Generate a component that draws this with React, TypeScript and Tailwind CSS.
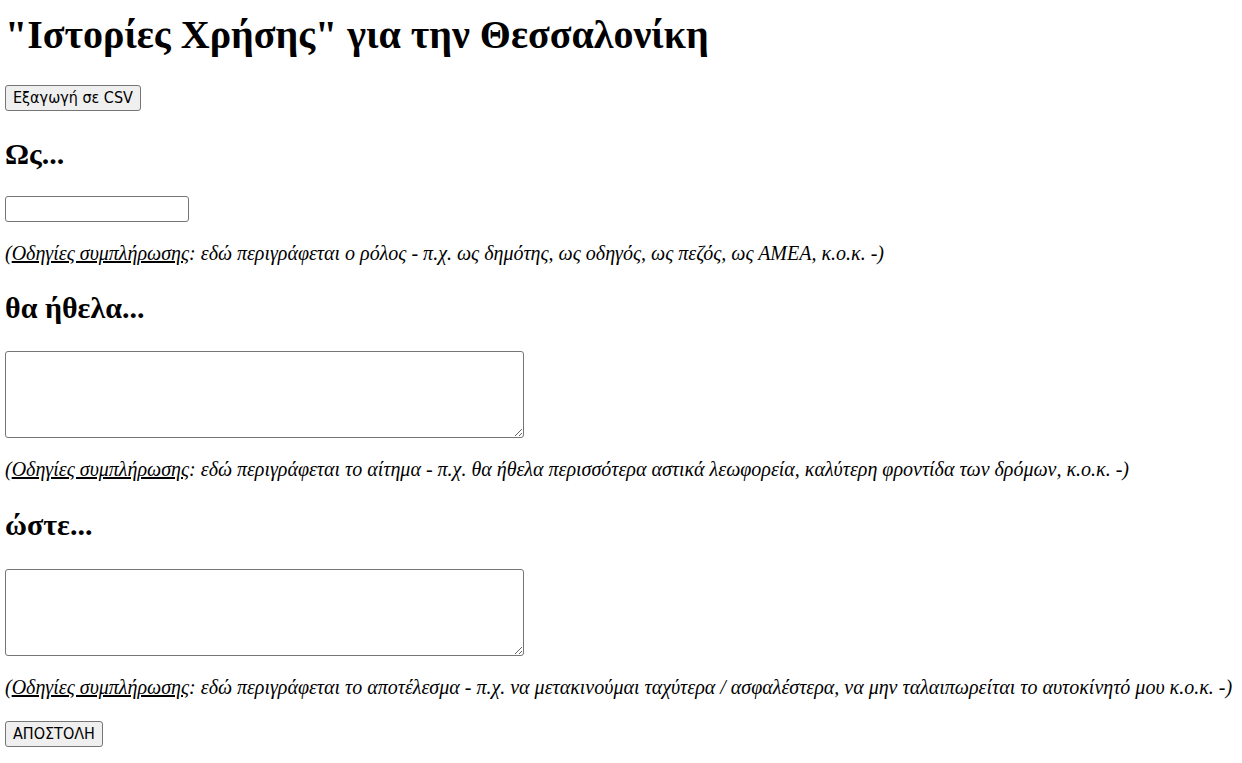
import React from 'react'

const serif = "font-['Liberation_Serif','Times_New_Roman',serif]"
const sans = "font-['DejaVu_Sans_Condensed','DejaVu_Sans',Tahoma,sans-serif]"

const Hint: React.FC<{ text: string }> = ({ text }) => (
  <p className={`${serif} italic text-[20px] leading-[23px] text-black`}>
    (<span className="underline">Οδηγίες συμπλήρωσης</span>: {text})
  </p>
)

const Heading: React.FC<{ children: React.ReactNode; className?: string }> = ({ children, className }) => (
  <h2 className={`${serif} font-bold text-[30px] leading-[35px] text-black ${className ?? ''}`}>{children}</h2>
)

const btn = `${sans} text-[16px] leading-[20px] text-black bg-[#efefef] border border-[#767676] rounded-[3px] px-[7px] py-[2px] hover:bg-[#e5e5e5]`

export default function App() {
  return (
    <div className="min-h-screen bg-white px-[5px] pt-[12px] pb-4">
      <h1 className={`${serif} font-bold text-[40px] leading-[46px] text-black`}>
        "Ιστορίες Χρήσης" για την Θεσσαλονίκη
      </h1>

      <div className="mt-[27px]">
        <button type="button" className={btn}>Εξαγωγή σε CSV</button>
      </div>

      <Heading className="mt-[25px]">Ως...</Heading>
      <input
        type="text"
        className="mt-[25px] block w-[184px] h-[26px] border border-[#767676] rounded-[3px] px-[3px] text-[16px] bg-white"
      />
      <div className="mt-[20px]">
        <Hint text="εδώ περιγράφεται ο ρόλος - π.χ. ως δημότης, ως οδηγός, ως πεζός, ως ΑΜΕΑ, κ.ο.κ. -" />
      </div>

      <Heading className="mt-[25px]">θα ήθελα...</Heading>
      <textarea className="mt-[26px] block w-[519px] h-[87px] border border-[#767676] rounded-[3px] bg-white" />
      <div className="mt-[20px]">
        <Hint text="εδώ περιγράφεται το αίτημα - π.χ. θα ήθελα περισσότερα αστικά λεωφορεία, καλύτερη φροντίδα των δρόμων, κ.ο.κ. -" />
      </div>

      <Heading className="mt-[26px]">ώστε...</Heading>
      <textarea className="mt-[27px] block w-[519px] h-[87px] border border-[#767676] rounded-[3px] bg-white" />
      <div className="mt-[20px]">
        <Hint text="εδώ περιγράφεται το αποτέλεσμα - π.χ. να μετακινούμαι ταχύτερα / ασφαλέστερα, να μην ταλαιπωρείται το αυτοκίνητό μου κ.ο.κ. -" />
      </div>

      <div className="mt-[22px]">
        <button type="button" className={btn}>ΑΠΟΣΤΟΛΗ</button>
      </div>
    </div>
  )
}
